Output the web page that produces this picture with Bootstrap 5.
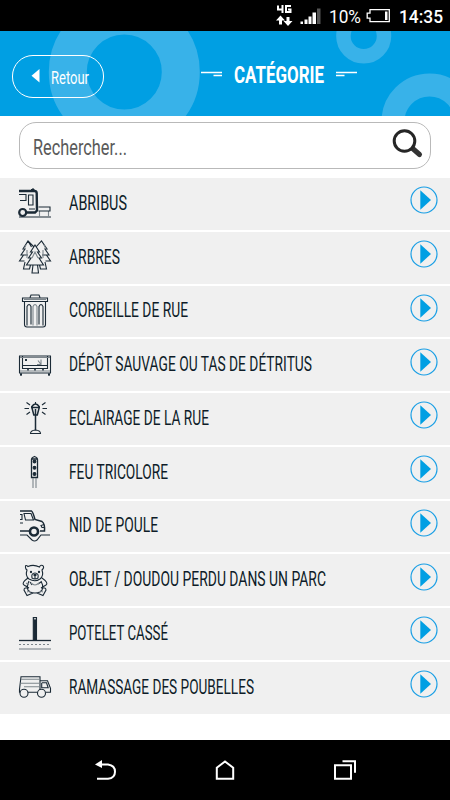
<!DOCTYPE html>
<html lang="fr">
<head>
<meta charset="utf-8">
<meta name="viewport" content="width=device-width, initial-scale=1">
<title>Catégorie</title>
<link href="https://cdn.jsdelivr.net/npm/bootstrap@5.3.0/dist/css/bootstrap.min.css" rel="stylesheet">
<style>
body{font-family:Roboto,"Liberation Sans",sans-serif;width:450px;height:800px;overflow:hidden;background:#fff}
svg{display:block;flex:none}
.fit{display:inline-block;white-space:nowrap;transform-origin:0 50%;line-height:1}
.status{height:31px;background:#000}
.status .pct{font-size:18px;margin-left:6px;padding-top:2px}
.status .clock{font-size:19px;font-weight:500;margin-left:8px;padding-top:2px}
.status{padding-right:7px}
.topbar{height:85px;background:#009fe3}
.rings{left:0;top:0}
.back{width:92px;height:43px;margin-left:12px;margin-top:5px;border:1.5px solid #fff;border-radius:21px;padding:3px 0 0 18px;background:transparent;font-size:18px}
.back svg{margin-right:10.5px;margin-top:-3px}
.title{font-size:23.5px;font-weight:700;margin:5px 12px 0 12px}
.search{margin:6px 19px 9px 18.5px;height:47px;border:1.5px solid #b9b9b9;border-radius:17px;padding:3px 6.5px 0 13px;font-size:22.5px;color:#5a5a5a}
.search svg{margin-top:-8px}
.rows .list-group-item{height:53.75px;background:#f0f0f0;border-bottom:2.5px solid #fff!important;color:#0e1c28;font-size:20px}
.rows .fit{margin-left:8.5px;margin-top:-2px}
.ico{fill:none;stroke:#1b2a36;stroke-width:1.1}
.ico .s{fill:#1b2a36}
.ico .g{stroke:#7d868c}
.go{margin:-7px 12px 0 auto}
.android{height:60px;background:#000}
</style>
<script src="https://cdn.jsdelivr.net/npm/bootstrap@5.3.0/dist/js/bootstrap.bundle.min.js"></script>
</head>
<body class="d-flex flex-column">
<div class="status d-flex align-items-center justify-content-end text-white flex-shrink-0">
  <svg width="52" height="31" viewBox="272 0 52 31"><g fill="none" stroke="#fff" stroke-width="2"><path d="M279 5.500v4h5.500M283.500 5v8M292 6h-5v6h4.500V9.500h-2.500"/></g>
  <path fill="#fff" d="M281.500 15.500l4.500 5h-3v4h-3v-4h-3zM289 26l-4.500-5h3v-4h3v4h3zM301.500 21.500h2.500v2.500h-2.500zM305.500 19.500h3v4.500h-3zM309.500 16.500h3v7.500h-3zM313.500 12.500h3.500V24h-3.500z"/><path fill="#555" d="M318 8.500h3.500V24H318z"/></svg>
  <span class="pct fit" data-w="32">10%</span>
  <svg class="ms-1" width="26" height="31" viewBox="365 0 26 31"><path d="M370 9.700h19.300v12H370v-3.500h-2.800v-5H370z" fill="none" stroke="#fff" stroke-width="1.300"/><path fill="#fff" d="M385 11.500h2.500V20H385z"/></svg>
  <span class="clock fit" data-w="44">14:35</span>
</div>
<header class="topbar position-relative d-flex align-items-center text-white flex-shrink-0">
  <svg class="rings position-absolute" width="450" height="85" viewBox="0 31 450 85"><g fill="none" stroke="#38b2e9"><circle cx="124.300" cy="72" r="56.500" stroke-width="38"/><circle cx="363.700" cy="36" r="20.300" stroke-width="14.500"/><circle cx="429.500" cy="121.500" r="36.500" stroke-width="23"/></g></svg>
  <button class="back position-relative d-flex align-items-center text-white"><svg width="9" height="14"><path d="M8.500 0v13.500L.5 6.800z" fill="#fff"/></svg><span class="fit" data-w="38">Retour</span></button>
  <div class="position-relative d-flex align-items-center ms-auto me-auto ps-1">
    <svg width="21" height="6"><path d="M0 1.500h21M12.500 4.500H21" stroke="#fff" stroke-width="1.300"/></svg>
    <h1 class="title mb-0 fit" data-w="90">CATÉGORIE</h1>
    <svg width="21" height="6"><path d="M0 1.500h21M0 4.500h8.500" stroke="#fff" stroke-width="1.300"/></svg>
  </div>
</header>
<div class="search d-flex align-items-center flex-shrink-0">
  <span class="fit" data-w="94">Rechercher...</span>
  <svg class="ms-auto" width="34" height="34" viewBox="390 126 34 34"><path d="M411.500 147.500l8 7" stroke="#333" stroke-width="5" stroke-linecap="round"/><circle cx="404.500" cy="141" r="10.300" fill="#fff" stroke="#262626" stroke-width="3"/></svg>
</div>
<ul class="rows list-group list-group-flush flex-shrink-0">
<li class="list-group-item d-flex align-items-center p-0" data-w="58">
<svg class="ico" width="60" height="51" viewBox="0 178 60 51"><path d="M19 191h15.500q2 0 2.200 2l.3 17.500-2 2H27" stroke-width="2.400"/><path d="M31 189.500h3.500M33 188v3M19 194.500h7v6h-6M28.500 195h4.500v10h-4.500zM29 209h6M19 217h32" /><path class="g" d="M39.500 211v6M48.500 211v6"/><path d="M38.500 207h11.500v4H38.500"/><circle cx="22.700" cy="212.500" r="3.500" stroke-width="2.200" fill="#f0f0f0"/></svg>ABRIBUS</li>
<li class="list-group-item d-flex align-items-center p-0" data-w="51">
<svg class="ico" width="60" height="51" viewBox="0 232 60 51"><path d="M34 247l-6-6-5 8h2l-4 6h2.500l-4 6h5M28 241l3.500 6M36 247l5.500-6 5.500 8h-2l4 6h-2.500l4 6h-5M35 245l-4.500 7h2l-4 6h2.500l-4.500 7h17l-4.500-7h2.500l-4-6h2zM25 262l-1.500 7h6l1-4M45 262l1.500 7h-6l-1-4M33 265l-1 8h6.500l-1-8M22 255h6M42 255h6"/><path class="g" d="M26 245l-2 4M44 245l2 4M32 258l3-6 3 6M27 250v8M43 250v8"/></svg>ARBRES</li>
<li class="list-group-item d-flex align-items-center p-0" data-w="119">
<svg class="ico" width="60" height="51" viewBox="0 285.5 60 51"><path d="M22.500 297.500h25v3.500h-25zM30 297l1-2.500h8l1 2.500M24.500 301v23q0 2.500 2.500 2.500h16q2.500 0 2.500-2.500v-23M27 325v-19q2-4 4 0v18M39 324v-18q2-4 4 0v19"/><path class="g" d="M33 325v-19q2-4 4 0v19M24 299h22"/></svg>CORBEILLE DE RUE</li>
<li class="list-group-item d-flex align-items-center p-0" data-w="243">
<svg class="ico" width="60" height="51" viewBox="0 339.5 60 51"><path d="M19.500 355.500h31v17h-31zM22.500 356v12h25v-12M23 365h24M21 373v2.500M49 373v2.500"/><path class="g" d="M20 357h30M20 370.500h30M38 360l3 4M41 359v5h-4"/><path d="M25 359.500h2M26 358.500v2M28 368v2M35 368v2M43 368v2M20 374h2M48 374h2" stroke-width="1.600"/></svg>DÉPÔT SAUVAGE OU TAS DE DÉTRITUS</li>
<li class="list-group-item d-flex align-items-center p-0" data-w="140">
<svg class="ico" width="60" height="51" viewBox="0 393 60 51"><path d="M31.500 407q4-6 8 0M31 407.500h9M32 408l1.800 7h3.500l1.800-7M35.500 409v21" stroke-width="1.500"/><path d="M35.500 402v2M30.500 433.500q0-3 5-3.500 5 .5 5 3.500zM29 408.500h-4.500M42.500 408.500H47M30 405l-3.500-2.500M42 405l3.500-2.500M30 412l-3.500 2.500M42 412l3.500 2.500"/></svg>ECLAIRAGE DE LA RUE</li>
<li class="list-group-item d-flex align-items-center p-0" data-w="99">
<svg class="ico" width="60" height="51" viewBox="0 447 60 51"><path d="M31.500 477.500v-18q0-2 3-3 3 1 3 3v18zM31.500 459h6" stroke-width="1.300"/><path class="g" d="M33 478v10M36 478v10"/><g class="s"><circle cx="34.500" cy="461.500" r="1.400"/><circle cx="34.500" cy="467.800" r="1.400"/><circle cx="34.500" cy="474" r="1.400"/></g></svg>FEU TRICOLORE</li>
<li class="list-group-item d-flex align-items-center p-0" data-w="89">
<svg class="ico" width="60" height="51" viewBox="0 500.500 60 51"><path d="M20 510.500h11.500q1.500 1 3.500 8.500l7 2q3 2 2.500 9.500H40M29 530.500h-9" stroke-width="1.500"/><path d="M24 513h7l2.500 6.500h-8zM20 514h2v5h-2M20 522.500h3M44 524l-3 1 1 2h2.500M20 534.500h7l5 5q2.500 2 5 0l4-5h9"/><circle cx="34" cy="531" r="4" stroke-width="2.600"/></svg>NID DE POULE</li>
<li class="list-group-item d-flex align-items-center p-0" data-w="257">
<svg class="ico" width="60" height="51" viewBox="0 554 60 51"><path d="M28 565.500q-3-2.500-2.500 1 0 1.500 1.500 2.500-2 6 2 9 6 3.500 11 0 4-3 2-9 3-3 .5-4.500-2-1-3 1.500-6-3-11.500-.5zM28 577q-7 5-4 7l5 3M42 577q7 5 4 7l-5 3M29 580q-4 8 1 11 5 2 10 0 5-3 1-11M29 587q-5-1-5 2l3 5.500 6-2.500M41 587q5-1 5 2l-3 5.500-6-2.500M32 577q-1-5 3-5 4 0 3 5-3 2-6 0zM30 581l2 3M35 575v3M38 583l3-2"/><path class="g" d="M31 582q4 4 8 0M27 591l3-1M43 591l-3-1M26 582l3 2"/><g class="s"><circle cx="31" cy="571" r=".6"/><circle cx="39" cy="571" r=".6"/><ellipse cx="35" cy="574" rx="1.200" ry=".6"/></g></svg>OBJET / DOUDOU PERDU DANS UN PARC</li>
<li class="list-group-item d-flex align-items-center p-0" data-w="99">
<svg class="ico" width="60" height="51" viewBox="0 608 60 51"><path class="s" d="M33.300 617.500h3.200v23h-3.200z"/><path stroke="#fff" stroke-width="1" d="M34 618.800h2"/><path d="M19 640.500h32" stroke-width="1.300"/><path class="g" d="M19 644.500h32" stroke-dasharray="2 2"/><path class="g" d="M19 649h32"/></svg>POTELET CASSÉ</li>
<li class="list-group-item d-flex align-items-center p-0" data-w="185">
<svg class="ico" width="60" height="51" viewBox="0 661.750 60 51"><path d="M20.500 692h-1v-3l1.500-12.500h19V692M40 680.500h7.500l3 7.500v4h-4.500M28 692h9M42 682.500h4.500l1.700 5h-6.500v-5"/><path class="g" d="M21 679h19M20.500 683h19M24 686.500h15.500"/><circle cx="24" cy="693" r="4" fill="#f0f0f0"/><circle cx="41.500" cy="693" r="4" fill="#f0f0f0"/></svg>RAMASSAGE DES POUBELLES</li>
</ul>
<nav class="android mt-auto flex-shrink-0">
<svg width="450" height="60" viewBox="0 740 450 60"><g fill="none" stroke="#fff" stroke-width="2"><path d="M98 764.500h10q7 1 7 7.200t-7 7.100H97"/><path d="M216.800 778.800v-11l8.200-6.300 8.200 6.300v11z"/><path d="M335 765.300h16v13.500h-16zM342.500 761.300h12.500v11.500"/></g><path d="M95 764.500l7-4.500v8z" fill="#fff"/></svg>
</nav>
<script>
// Each row gets a condensed label and the arrow button.
document.querySelectorAll('.rows li').forEach(li => {
  const label = document.createElement('span');
  label.className = 'fit';
  label.dataset.w = li.dataset.w;
  label.textContent = li.lastChild.textContent.trim();
  li.lastChild.replaceWith(label);
  li.insertAdjacentHTML('beforeend', '<svg class="go" width="28" height="28" viewBox="0 0 28 28"><circle cx="14" cy="14" r="13" fill="none" stroke="#1a9fe5" stroke-width="1.200"/><path d="M10.300 4.300v19.400L21 14z" fill="#009fe3"/></svg>');
});
document.querySelectorAll('.fit').forEach(el => {
  const natural = el.getBoundingClientRect().width, w = +el.dataset.w;
  const right = parseFloat(getComputedStyle(el).marginRight);
  el.style.transform = `scaleX(${w / natural})`;
  el.style.marginRight = `${right + w - natural}px`;
});
</script>
</body>
</html>
